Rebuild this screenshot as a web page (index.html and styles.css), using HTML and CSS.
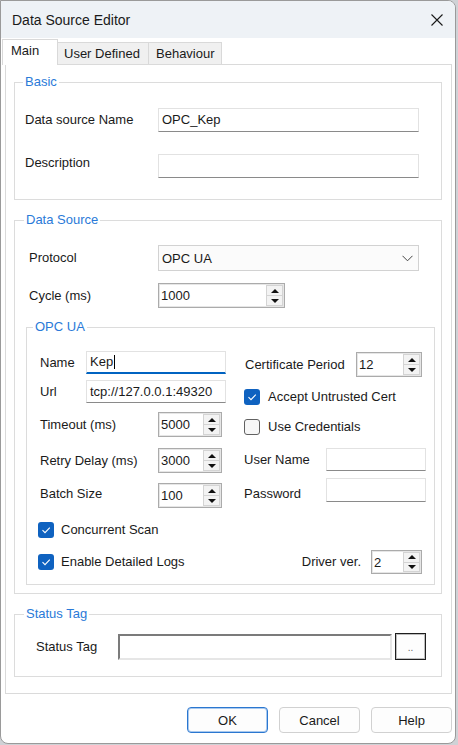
FILE: index.html
```html
<!doctype html>
<html lang="en">
    <head>
        <meta charset="UTF-8" />
        <title>Data Source Editor</title>
        <link rel="stylesheet" href="styles.css">
    </head>
    <body>
        <div class="window">
            <div class="titlebar">
                <span class="title">Data Source Editor</span>
                <svg class="close" width="12" height="12" viewBox="0 0 12 12">
                    <path d="M0.5 0.5 L11.5 11.5 M11.5 0.5 L0.5 11.5" stroke="#1a1a1a" stroke-width="1.1" fill="none" />
                </svg>
            </div>

            <div class="tabs">
                <div class="tab active">Main</div>
                <div class="tab tab-ud">User Defined</div>
                <div class="tab tab-bh">Behaviour</div>
            </div>

            <div class="panel">
                <!-- Basic -->
                <fieldset class="group basic">
                    <legend>Basic</legend>
                    <div class="row">
                        <span class="lbl w133">Data source Name</span>
                        <div class="txt w261">OPC_Kep</div>
                    </div>
                    <div class="row row-desc">
                        <span class="lbl w133 up">Description</span>
                        <div class="txt w261"></div>
                    </div>
                </fieldset>

                <!-- Data Source -->
                <fieldset class="group source">
                    <legend>Data Source</legend>
                    <div class="row ds-row">
                        <span class="lbl w129">Protocol</span>
                        <div class="combo">
                            <span>OPC UA</span>
                            <svg width="11" height="7" viewBox="0 0 11 7">
                                <polyline points="0.5,0.8 5.5,5.8 10.5,0.8" stroke="#444" stroke-width="1" fill="none" />
                            </svg>
                        </div>
                    </div>
                    <div class="row ds-row row-cycle">
                        <span class="lbl w129">Cycle (ms)</span>
                        <div class="num w127">
                            <span class="val">1000</span>
                            <div class="spin"><span class="up-btn"><i class="tri-up"></i></span><span class="dn-btn"><i class="tri-dn"></i></span></div>
                        </div>
                    </div>

                    <!-- OPC UA -->
                    <fieldset class="group opc">
                        <legend>OPC UA</legend>
                        <div class="opc-grid">
                            <div class="col">
                                <div class="row">
                                    <span class="lbl w46">Name</span>
                                    <div class="txt focus w140 h23">Kep<span class="caret"></span></div>
                                </div>
                                <div class="row mt6">
                                    <span class="lbl w46">Url</span>
                                    <div class="txt w140 h23 clip">tcp://127.0.0.1:49320</div>
                                </div>
                                <div class="row mt9">
                                    <span class="lbl w118">Timeout (ms)</span>
                                    <div class="num w64"><span class="val">5000</span><div class="spin"><span class="up-btn"><i class="tri-up"></i></span><span class="dn-btn"><i class="tri-dn"></i></span></div></div>
                                </div>
                                <div class="row mt11">
                                    <span class="lbl w118">Retry Delay (ms)</span>
                                    <div class="num w64"><span class="val">3000</span><div class="spin"><span class="up-btn"><i class="tri-up"></i></span><span class="dn-btn"><i class="tri-dn"></i></span></div></div>
                                </div>
                                <div class="row mt10">
                                    <span class="lbl w118 dn2">Batch Size</span>
                                    <div class="num w64"><span class="val">100</span><div class="spin"><span class="up-btn"><i class="tri-up"></i></span><span class="dn-btn"><i class="tri-dn"></i></span></div></div>
                                </div>
                            </div>
                            <div class="col">
                                <div class="row mt1">
                                    <span class="lbl w112 pl1">Certificate Period</span>
                                    <div class="num w66"><span class="val">12</span><div class="spin"><span class="up-btn"><i class="tri-up"></i></span><span class="dn-btn"><i class="tri-dn"></i></span></div></div>
                                </div>
                                <div class="check mt12">
                                    <span class="cb on"><svg width="16" height="16" viewBox="0 0 16 16"><polyline points="4.5,8.2 7,10.7 11.8,5.6" stroke="#fff" stroke-width="1.1" fill="none" /></svg></span>
                                    <span>Accept Untrusted Cert</span>
                                </div>
                                <div class="check mt14">
                                    <span class="cb off"></span>
                                    <span>Use Credentials</span>
                                </div>
                                <div class="row mt13">
                                    <span class="lbl w82">User Name</span>
                                    <div class="txt w100 h23"></div>
                                </div>
                                <div class="row mt6">
                                    <span class="lbl w82 down">Password</span>
                                    <div class="txt w100 h24"></div>
                                </div>
                            </div>
                        </div>
                        <div class="check check-left mt14">
                            <span class="cb on"><svg width="16" height="16" viewBox="0 0 16 16"><polyline points="4.5,8.2 7,10.7 11.8,5.6" stroke="#fff" stroke-width="1.1" fill="none" /></svg></span>
                            <span>Concurrent Scan</span>
                        </div>
                        <div class="bottom-row">
                            <div class="check check-left">
                                <span class="cb on"><svg width="16" height="16" viewBox="0 0 16 16"><polyline points="4.5,8.2 7,10.7 11.8,5.6" stroke="#fff" stroke-width="1.1" fill="none" /></svg></span>
                                <span>Enable Detailed Logs</span>
                            </div>
                            <div class="driver">
                                <span class="lbl">Driver ver.</span>
                                <div class="num w51 h24"><span class="val">2</span><div class="spin"><span class="up-btn"><i class="tri-up"></i></span><span class="dn-btn"><i class="tri-dn"></i></span></div></div>
                            </div>
                        </div>
                    </fieldset>
                </fieldset>

                <!-- Status Tag -->
                <fieldset class="group status">
                    <legend>Status Tag</legend>
                    <div class="row">
                        <span class="lbl w93 pl11">Status Tag</span>
                        <div class="sunken"></div>
                        <div class="browse">..</div>
                    </div>
                </fieldset>
            </div>

            <div class="buttons">
                <button class="btn def">OK</button>
                <button class="btn">Cancel</button>
                <button class="btn">Help</button>
            </div>
        </div>
    </body>
</html>
```

FILE: styles.css
```css
* {
    box-sizing: border-box;
}
body {
    margin: 0;
    background-color: #cfd2d6;
    font-family: "Liberation Sans", Arial, sans-serif;
    font-size: 13px;
    color: #1a1a1a;
}
.window {
    width: 456px;
    height: 744px;
    background-color: #fff;
    border: 1px solid #9a9a9a;
    border-radius: 0 8px 8px 8px;
    overflow: hidden;
    display: flex;
    flex-direction: column;
}
.titlebar {
    height: 37px;
    flex-shrink: 0;
    background-color: #eef2f6;
    display: flex;
    align-items: center;
    justify-content: space-between;
    padding: 0 12px 0 11px;
    font-size: 14px;
}

/* tabs */
.tabs {
    height: 26px;
    flex-shrink: 0;
    display: flex;
    align-items: flex-end;
    padding-left: 1px;
}
.tab {
    height: 22px;
    border: 1px solid #d9d9d9;
    border-bottom: none;
    background-color: #f0f0f0;
    padding: 3px 0 0 6px;
    line-height: 16px;
    margin-left: -1px;
}
.tab.active {
    height: 26px;
    width: 56px;
    margin-left: 0;
    margin-bottom: -1px;
    padding-left: 8px;
    background-color: #fff;
    position: relative;
    z-index: 1;
}
.tab-ud {
    width: 92px;
}
.tab-bh {
    width: 74px;
    padding-left: 7px;
}

.panel {
    height: 630px;
    flex-shrink: 0;
    margin: 0 3px 0 4px;
    border: 1px solid #dadada;
    padding: 9px 9px 0 8px;
}

/* group boxes */
.group {
    margin: 0;
    min-width: 0;
    border: 1px solid #dcdcdc;
}
.group legend {
    color: #2a7ad8;
    line-height: 16px;
    padding: 0 2px;
}
.basic {
    padding: 18px 0 21px 10px;
}
.basic legend {
    margin-left: -2px;
}
.source {
    margin-top: 12px;
    padding: 17px 6px 8px 11px;
}
.source legend {
    margin-left: -2px;
}
.opc {
    margin-top: 11px;
    padding: 16px 8px 10px 13px;
}
.opc legend {
    margin-left: -7px;
}
.status {
    margin-top: 12px;
    padding: 11px 0 16px 10px;
}
.status legend {
    margin-left: -1px;
}

.row {
    display: flex;
    align-items: center;
}
.row-desc {
    margin-top: 22px;
}
.ds-row {
    margin-left: 3px;
}
.row-cycle {
    margin-top: 12px;
}
.lbl {
    line-height: 16px;
    white-space: nowrap;
    flex-shrink: 0;
}
.lbl.up {
    margin-bottom: 6px;
}
.lbl.down {
    margin-top: 9px;
}
.lbl.dn2 {
    margin-bottom: 4px;
}
.pl1 {
    padding-left: 1px;
}
.pl11 {
    padding-left: 11px;
}
.mt1 { margin-top: 1px; }
.mt6 { margin-top: 6px; }
.mt9 { margin-top: 9px; }
.mt10 { margin-top: 10px; }
.mt11 { margin-top: 11px; }
.mt12 { margin-top: 12px; }
.mt13 { margin-top: 13px; }
.mt14 { margin-top: 14px; }

.w46 { width: 46px; }
.w51 { width: 51px; }
.w64 { width: 64px; }
.w66 { width: 66px; }
.w82 { width: 82px; }
.w93 { width: 93px; }
.w100 { width: 100px; }
.w112 { width: 112px; }
.w118 { width: 118px; }
.w127 { width: 127px; }
.w129 { width: 129px; }
.w133 { width: 133px; }
.w140 { width: 140px; }
.w261 { width: 261px; }

/* text boxes */
.txt {
    height: 24px;
    border: 1px solid #e2e2e2;
    border-bottom-color: #8a8a8a;
    background-color: #fff;
    padding: 0 3px;
    line-height: 22px;
    display: flex;
    align-items: center;
    white-space: nowrap;
    overflow: hidden;
}
.txt.h23 { height: 23px; }
.txt.h24 { height: 24px; }
.txt.focus {
    border-bottom: 2px solid #0063c1;
}
.caret {
    display: inline-block;
    width: 1px;
    height: 14px;
    margin-left: 1px;
    background-color: #000;
}
.combo {
    width: 261px;
    height: 26px;
    border: 1px solid #d2d2d2;
    background-color: #fbfbfb;
    display: flex;
    align-items: center;
    justify-content: space-between;
    padding: 0 5px 0 3px;
}

/* numeric up/down */
.num {
    height: 25px;
    border: 1px solid #ababab;
    box-shadow: inset 0 0 0 1px #e6e6e6;
    background-color: #fff;
    display: flex;
}
.num.h24 { height: 24px; }
.num .val {
    flex: 1;
    padding-left: 2px;
    display: flex;
    align-items: center;
}
.spin {
    width: 17px;
    margin: 1px 1px 1px 0;
    display: flex;
    flex-direction: column;
    border: 1px solid #d4d4d4;
    background-color: #f3f3f3;
}
.spin span {
    flex: 1;
    display: flex;
    align-items: center;
    justify-content: center;
}
.spin .up-btn {
    border-bottom: 1px solid #d4d4d4;
}
.tri-up {
    width: 0;
    height: 0;
    border-left: 4px solid transparent;
    border-right: 4px solid transparent;
    border-bottom: 4px solid #111;
}
.tri-dn {
    width: 0;
    height: 0;
    border-left: 4px solid transparent;
    border-right: 4px solid transparent;
    border-top: 4px solid #111;
}

/* check boxes */
.check {
    display: flex;
    align-items: center;
    gap: 8px;
    height: 16px;
    line-height: 16px;
}
.check-left {
    margin-left: -2px;
    gap: 7px;
}
.cb {
    width: 16px;
    height: 16px;
    border-radius: 3px;
    flex-shrink: 0;
}
.cb svg {
    display: block;
}
.cb.on {
    background-color: #0f62c0;
}
.cb.off {
    border: 1px solid #616161;
    background-color: #f7f7f7;
}

.opc-grid {
    display: grid;
    grid-template-columns: 204px 1fr;
}
.bottom-row {
    margin-top: 12px;
    height: 24px;
    display: flex;
    align-items: center;
    justify-content: space-between;
    padding-right: 4px;
}
.driver {
    display: flex;
    align-items: center;
    gap: 10px;
}

/* status tag */
.sunken {
    width: 274px;
    height: 26px;
    border: 2px solid;
    border-color: #7b7b7b #e6e6e6 #e6e6e6 #7b7b7b;
    background-color: #fff;
}
.browse {
    width: 31px;
    height: 27px;
    margin-left: 3px;
    border: 1px solid #1e1e1e;
    box-shadow: inset 0 0 0 1px #bdbdbd;
    background-color: #fdfdfd;
    color: #666;
    font-size: 10px;
    text-align: center;
    line-height: 28px;
}

/* dialog buttons */
.buttons {
    margin-top: 13px;
    padding-right: 3px;
    display: flex;
    justify-content: flex-end;
    gap: 11px;
}
.btn {
    width: 81px;
    height: 26px;
    border: 1px solid #d1d1d1;
    border-radius: 4px;
    background-color: #fdfdfd;
    font-family: "Liberation Sans", Arial, sans-serif;
    font-size: 13px;
    color: #1a1a1a;
    padding: 0;
}
.btn.def {
    border-color: #2b77d0;
    box-shadow: inset 0 0 0 1px #a9c9ee;
}
```
